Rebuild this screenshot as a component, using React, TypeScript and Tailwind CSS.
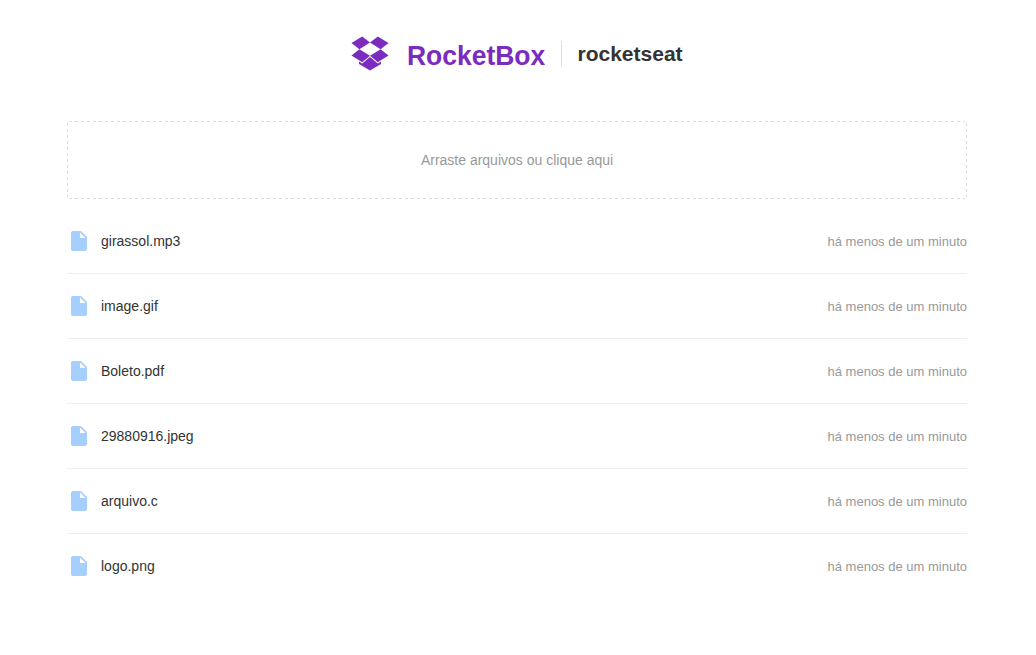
import React from "react";
import { MdInsertDriveFile } from "react-icons/md";

const files = ["girassol.mp3", "image.gif", "Boleto.pdf", "29880916.jpeg", "arquivo.c", "logo.png"];

function Logo() {
  return (
    <svg width="38" height="35" viewBox="0 0 38 35" fill="#7b2cbf" className="shrink-0">
      <path d="M11.2 0.5 19 6.5 8.4 13.3 0.5 7z" />
      <path d="M26.8 0.5 37.5 7 29.6 13.3 19 6.5z" />
      <path d="M8.4 13.3 19 19.8 11.2 26.3 0.5 19.5z" />
      <path d="M29.6 13.3 37.5 19.5 26.8 26.3 19 19.8z" />
      <path d="M19 21 26.8 27.4 30 25.4V28L19 34.5 8 28v-2.6l3.2 2z" />
    </svg>
  );
}

export default function App() {
  return (
    <div className="h-[655px] overflow-hidden bg-white px-[67px] pt-9 font-['Liberation_Sans',Arial,sans-serif]">
      <div className="w-[900px]">
        <header className="flex h-[35px] items-center pl-[284px]">
          <Logo />
          <span className="ml-[18px] mt-[4px] w-[139px] origin-left scale-x-[0.945] text-[28px] leading-8 font-bold whitespace-nowrap text-[#7b2cbf]">
            RocketBox
          </span>
          <h1 className="ml-[15px] border-l border-[#ddd] pl-[15.5px] text-[21px] leading-[25px] font-bold text-[#333]">
            rocketseat
          </h1>
        </header>
        <div className="mt-[50px] flex h-[78px] items-center justify-center rounded bg-[image:linear-gradient(90deg,#ddd_3.5px,transparent_3.5px),linear-gradient(90deg,#ddd_3.5px,transparent_3.5px),linear-gradient(#ddd_3px,transparent_3px),linear-gradient(#ddd_3px,transparent_3px)] bg-[size:6px_1px,6px_1px,1px_6px,1px_6px] bg-[position:2px_0,2px_77px,0_2px,899px_2px] [background-repeat:repeat-x,repeat-x,repeat-y,repeat-y] text-sm text-[#999]">
          Arraste arquivos ou clique aqui
        </div>
        <ul className="mt-[10px]">
          {files.map((name) => (
            <li key={name} className="flex h-[65px] items-center justify-between border-b border-[#eee] last:border-transparent">
              <span className="flex items-center">
                <MdInsertDriveFile size={24} color="#a5cfff" />
                <strong className="ml-[10px] text-sm font-normal text-[#333]">{name}</strong>
              </span>
              <span className="mt-[2px] text-[13px] leading-5 text-[#999]">há menos de um minuto</span>
            </li>
          ))}
        </ul>
      </div>
    </div>
  );
}
